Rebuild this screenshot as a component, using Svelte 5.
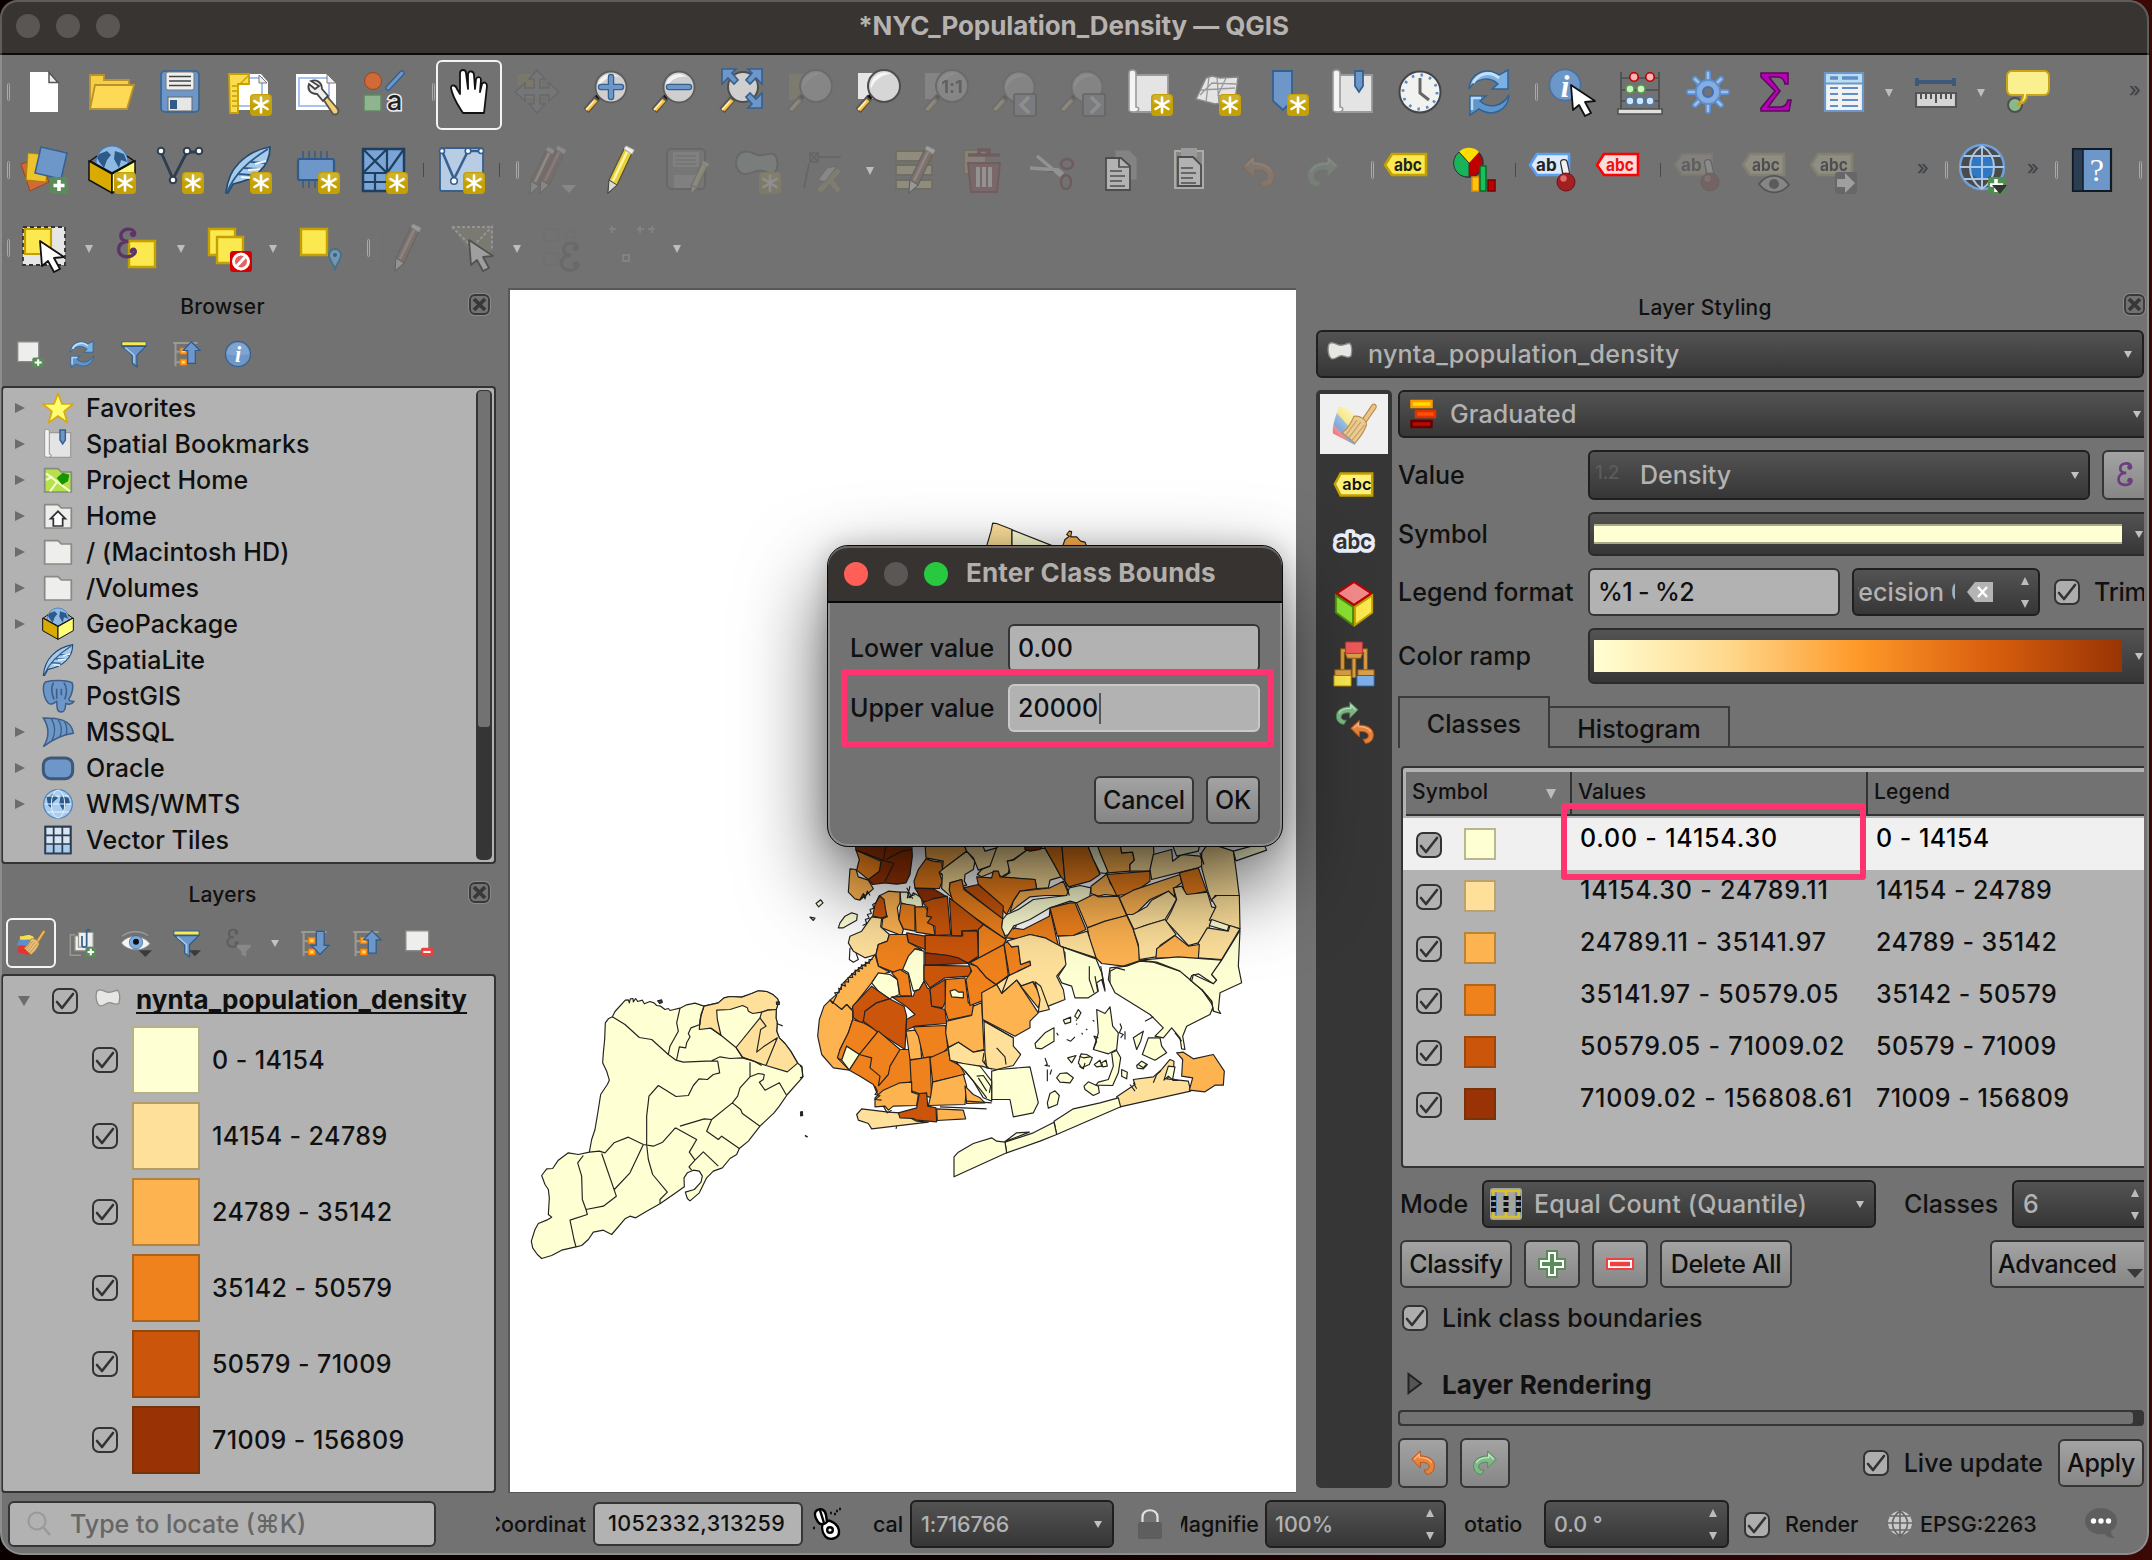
<script>
  // ---- shared icon fragments (48 x 48 grid) ----
  const star = '<rect x="26" y="26" width="22" height="22" rx="4" fill="#c4a000"/><rect x="27.500" y="27" width="19" height="9" rx="3" fill="#fff" opacity=".18"/><g stroke="#fff" stroke-width="2.600" stroke-linecap="round"><path d="M37 29.500v15M30.500 33l13 8M43.500 33l-13 8"/></g>';
  const plus = '<rect x="30" y="31" width="18" height="17" rx="3" fill="#5a8c5a"/><path d="M39 34v11M33.500 39.500h11" stroke="#fff" stroke-width="3.500"/>';
  const lens = '<path d="M17 29L5 43" stroke="#555" stroke-width="7"/><path d="M15 32L6 42" stroke="#fcc13b" stroke-width="4"/><path d="M13 33l-8 9" stroke="#fff3c8" stroke-width="1.300"/><path d="M20 25l-4 5" stroke="#111" stroke-width="4.500"/>';
  const glass = '<circle cx="30" cy="19" r="15.500" fill="#cfcfcf" stroke="#5c5c5c" stroke-width="1.800"/><path d="M17 22A13 13 0 0 1 38 9 18 18 0 0 0 17 22z" fill="#f3f3f3"/>';
  const bigGlass = '<circle cx="31" cy="18" r="16" fill="#d6d6d6" stroke="#4e4e4e" stroke-width="2"/><path d="M18 21A14 14 0 0 1 38 6 22 22 0 0 0 18 21z" fill="#f6f6f6"/>';
  const pencil = '<path d="M12 34L27 3l8 4-15 32-9 8z" fill="#e8cf3a" stroke="#54543c" stroke-width="1.300"/><path d="M16 35L30 6" stroke="#fff7a8" stroke-width="2.500"/><path d="M27 3l2-3 8 4-2 4z" fill="#eee" stroke="#bbb"/><path d="M12 34l8 5-9 8z" fill="#d8d8d8" stroke="#444"/>';
  const cursor = '<path d="M21 16l2 25 6-5 6 11 6-3-6-11 10-1z" fill="#fff" stroke="#111" stroke-width="1.800" stroke-linejoin="round"/>';
  const refresh = '<path d="M4 21C5 6 20-2 34 7l9-5v19H27l6-5c-9-8-22-6-29 5z" fill="#7db0e2" stroke="#2f6396" stroke-width="1.500"/><path d="M8 15C14 4 26 3 34 10" stroke="#c5dff5" stroke-width="3" fill="none"/><path d="M44 27c-1 15-16 23-30 14l-9 6V28h16l-6 5c9 8 22 6 29-6z" fill="#5f95cd" stroke="#2f6396" stroke-width="1.500"/><path d="M7 42V30h9" stroke="#b9d8f2" stroke-width="2.500" fill="none"/>';
  const feather = '<path d="M2 47c1-12 5-22 13-30C24 8 34 3 46 1c0 11-4 19-11 25-7 7-16 10-26 12L4 47z" fill="#a9cbea" stroke="#234a72" stroke-width="1.700"/><path d="M3 46C11 28 23 16 44 3M14 28l14 1M20 22l15 1M27 16l14 1" stroke="#2b5b8c" stroke-width="1.800" fill="none"/><path d="M17 31l10 1M24 24l12-1M31 18l11-3" stroke="#eef6ff" stroke-width="2"/>';
  const geo = '<circle cx="24" cy="16" r="16" fill="#8db9e3" stroke="#4a7bb0" stroke-width="1.200"/><path d="M11 8l8-3 4 4-4 5-3 8-4-5-3-5zM27 5l9 3 3 8-6-2-2 8-5-9z" fill="#2d5a88"/><path d="M2 15l22 12L46 15l-7-5M2 15l7-5" stroke="#111" stroke-width="1.500" fill="none"/><path d="M1 15l23 13v19L1 34z" fill="#d9aa00" stroke="#111" stroke-width="1.500"/><path d="M47 15L24 28v19l23-13z" fill="#ffff78" stroke="#111" stroke-width="1.500"/>';
  const tag = (f, s, t, c) => `<path d="M1 19L8 8h34v21H8z" fill="${f}" stroke="${s}" stroke-width="2.600"/><text x="24" y="25" font-size="17" font-weight="700" fill="${c}" text-anchor="middle" textLength="28" lengthAdjust="spacingAndGlyphs">${t}</text>`;
  const pin = '<path d="M34 17l2 10" stroke="#333" stroke-width="8" stroke-linecap="round"/><path d="M34 17l2 9" stroke="#f0f0f0" stroke-width="5.500" stroke-linecap="round"/><circle cx="36" cy="36" r="9" fill="#a42020" stroke="#6d1212"/><circle cx="33.500" cy="32.500" r="3.200" fill="#e06a6a"/>';
  const funnel = '<path d="M3 3h42v7H3z" fill="#fce94f" stroke="#36618f" stroke-width="2"/><path d="M4 11h40L29 26v20l-8-6V26z" fill="#6d97c9" stroke="#2f5a89" stroke-width="2"/><path d="M9 13l15 13v14" fill="none" stroke="#a9c8e8" stroke-width="2.500"/>';
  const treeBase = '<path d="M2 5h42M6 5v40M6 20h10M6 38h10" stroke="#9a9a90" stroke-width="3.500" fill="none"/><path d="M14 14h11v10H14zM14 33h11v10H14z" fill="#ff9a2a" stroke="#f57900" stroke-width="1.500"/><path d="M17 17h5v4h-5zM17 36h5v4h-5z" fill="#ffe34f"/>';
  const undo = '<path d="M3 17L19 2v9c16 0 27 7 26 20-1 9-7 14-15 14l-4-8c8 1 11-4 9-9-2-4-8-6-16-5v10z" fill="#e8833a" stroke="#b9541a" stroke-width="1.800"/><path d="M8 17l9-9v6c12 0 20 3 23 10" fill="none" stroke="#f9b98c" stroke-width="2.300"/>';
  const redo = '<g transform="matrix(-1 0 0 1 48 0)"><path d="M3 17L19 2v9c16 0 27 7 26 20-1 9-7 14-15 14l-4-8c8 1 11-4 9-9-2-4-8-6-16-5v10z" fill="#7fba86" stroke="#4f8a58" stroke-width="1.800"/><path d="M8 17l9-9v6c12 0 20 3 23 10" fill="none" stroke="#c8e8cc" stroke-width="2.300"/></g>';
  const folder = '<path d="M4 7h20l5 5h15v30H4z" fill="#eeeeec" stroke="#888a85" stroke-width="2.600"/>';
  const book = '<path d="M7 7h36v37H7z" fill="#e4e4e4" stroke="#9a9a9a" stroke-width="1.800"/><path d="M4 42V5c0-4 7-4 7 0v34c4 0 4 5-2 5-3 0-5-1-5-2z" fill="#f4f4f4" stroke="#9a9a9a" stroke-width="1.600"/>';
  const brush = '<path d="M5 12c10 2 12-6 24 2l-4 14-20 2z" fill="#fbe54a" opacity=".95"/><path d="M4 17c8 4 14-2 22 3l-4 12-22-4z" fill="#5d8fcc"/><path d="M3 29c8-4 14 4 20 0l4 14-12 1C10 40 6 42 1 40z" fill="#ee2f2f"/><path d="M33 20L44 3c2-2 5 0 4 3L37 23z" fill="#e9b566" stroke="#9d6a1c" stroke-width="1.300"/><path d="M24 17c6-2 14 3 14 9-4 9-9 14-14 18L12 33c6-4 9-9 12-16z" fill="#e7c07b" stroke="#a87931" stroke-width="1.300"/><path d="M27 20L16 35M31 22L19 38M35 25L22 41" stroke="#b98a3e" stroke-width="1.300"/>';
  const poly = '<path d="M3 9C6 2 14 6 21 9c8 3 14-3 21-3 5 5 4 17 2 24-7 5-12-2-18-1-7 1-13 9-18 5C2 30 1 17 3 9z" fill="#e6e6e4" stroke="#8e8e88" stroke-width="2.400"/>';
  const epsilon = (c) => `<path d="M31 9c-2-7-18-7-18 4 0 6 6 7 10 7-7 0-13 4-13 11 0 12 19 12 22 3M31 9c1 4-4 5-4 1M32 34c0-5-6-4-5 0" fill="none" stroke="${c}" stroke-width="4.500" stroke-linecap="round"/>`;
  const down = '<path d="M28 35h20L38 45z" fill="#3a3a3a"/>';

  const icons = {
    page: '<path d="M10 4h18l10 11v29H10z" fill="#fff"/><path d="M29 4.500v10h9z" fill="#eee" stroke="#555" stroke-width="1.500"/>',
    open: '<path d="M2 41V7h14v5h25v8" fill="#f8ce46" stroke="#b8922c" stroke-width="1.800"/><path d="M2 41L7 17h39l-7 24z" fill="#fdd955" stroke="#b8922c" stroke-width="1.800"/>',
    save: '<rect x="5" y="3" width="38" height="41" rx="4" fill="#6d97c9" stroke="#44678f" stroke-width="2"/><rect x="10" y="4" width="28" height="18" rx="2" fill="#eee" stroke="#777"/><path d="M13 8.500h22M13 13h22M13 17.500h22" stroke="#444" stroke-width="1.700"/><rect x="12" y="29" width="24" height="14" fill="#e6e6e6" stroke="#666"/><rect x="14" y="32" width="7" height="9" fill="#315a8b"/>',
    layoutNew: '<path d="M5 6h32l7 8v28H5z" fill="#fff"/><path d="M12 10h26v28H12z" fill="none" stroke="#a9c2ee" stroke-width="2"/><path d="M35 7v8h8z" fill="#eee" stroke="#777"/><path d="M5 6h20v10H14v29H6z" fill="#fbdc50" stroke="#c8a000" stroke-width="1.800"/><path d="M8 18h5M8 23h5M8 28h5M8 33h5M8 38h5M15 17l9-9" stroke="#c8a000" stroke-width="1.400"/>' + star,
    layouts: '<path d="M4 6h31l9 9v27H4z" fill="#fff"/><path d="M7 10h30v28H7z" fill="none" stroke="#a9c2ee" stroke-width="2"/><path d="M35 6v9h9z" fill="#eee" stroke="#777"/><path d="M29 28l12 18c5 2 7-3 4-6L32 25z" fill="#f0d070" stroke="#555" stroke-width="1.800"/><path d="M19 13c5-2 11 1 11 8l6 7-5 5-6-7c-7 0-10-5-8-10l6 5 4-3z" fill="#eee" stroke="#444" stroke-width="1.800"/>',
    styleMgr: '<circle cx="13" cy="13" r="8.500" fill="#d06a36" stroke="#9c4520"/><path d="M28 20L42 5" stroke="#365f8c" stroke-width="5.500" stroke-linecap="round"/><path d="M28 20L42 5" stroke="#6d97c9" stroke-width="3" stroke-linecap="round"/><path d="M4 27h17v16H4z" fill="#8fb48f" stroke="#5d8a5d" stroke-width="1.500"/><text x="27" y="42" font-size="27" fill="#222" stroke="#eee" stroke-width="3" paint-order="stroke">a</text>',
    hand: '<path d="M18 44C13 36 8 30 6 19c0-4 5-3 6 1l3 5V4c0-4 6-4 6 0l2 16V5c1-4 6-3 6 1l1 14 1-10c2-3 5-2 5 1l-1 12 2-8c2-3 5-1 5 2l-3 27z" transform="translate(0 1)" fill="#fff" stroke="#111" stroke-width="1.800" stroke-linejoin="round"/>',
    panSel: '<path d="M5 6h24v24H5z" fill="#a78f2e"/><path d="M24 2l8 9h-5v9h9v-5l10 9-10 9v-6h-9v9h5l-8 9-8-9h5v-9h-9v6L2 24l10-9v5h9v-9h-5z" fill="#7c8796" stroke="#444" stroke-width="1.500"/>',
    zoomIn: lens + glass + '<path d="M30 9v20M20 19h20" stroke="#36618f" stroke-width="6.500" stroke-linecap="round"/><path d="M30 9v20M20 19h20" stroke="#6d97c9" stroke-width="4" stroke-linecap="round"/>',
    zoomOut: lens + glass + '<path d="M20 19h20" stroke="#36618f" stroke-width="6.500" stroke-linecap="round"/><path d="M20 19h20" stroke="#6d97c9" stroke-width="4" stroke-linecap="round"/>',
    zoomFull: lens + '<circle cx="26" cy="19" r="15" fill="#cfcfcf" stroke="#4e4e4e" stroke-width="2"/><g fill="#6d97c9" stroke="#36618f" stroke-width="1.700"><path d="M5 1h14l-4 4 6 7-4 4-6-6-6 6z"/><path d="M45 1H31l4 4-6 7 4 4 6-6 6 6z"/><path d="M45 40H31l4-4-6-7 4-4 6 6 6-6z"/></g>',
    zoomSel: '<path d="M4 6h22v26H4z" fill="#b6a14a"/>' + lens + bigGlass,
    zoomLayer: '<path d="M5 5h22v26H5z" fill="#e6e6e6"/>' + lens + bigGlass,
    zoomNative: '<path d="M4 5h22v26H4z" fill="#ccc"/>' + lens + bigGlass + '<text x="31" y="25" font-size="18" font-weight="700" text-anchor="middle" fill="#222">1:1</text>',
    zoomLast: lens + glass + '<rect x="25" y="26" width="22" height="22" rx="2" fill="#8fa0b8" stroke="#333" stroke-width="1.600"/><path d="M40 29l-8 8 8 8" stroke="#fff" stroke-width="3.500" fill="none"/>',
    zoomNext: lens + glass + '<rect x="26" y="26" width="22" height="22" rx="2" fill="#8fa0b8" stroke="#333" stroke-width="1.600"/><path d="M34 29l8 8-8 8" stroke="#fff" stroke-width="3.500" fill="none"/>',
    mapNew: book + star,
    map3d: '<path d="M3 31L13 10l6-2 8 2 18-1-3 24-20 3z" fill="#e4e4e4" stroke="#888" stroke-width="1.500"/><path d="M8 22l34-2M16 9l-3 25M24 9l2 27M33 10l-8 17 17 5M7 27l12-12 24 1" stroke="#999" fill="none" stroke-width="1.300"/>' + star,
    bookmarkNew: '<path d="M12 3h19v30l-9 9-10-9z" fill="#6d97c9" stroke="#36618f" stroke-width="1.800"/>' + star,
    bookmarks: book + '<path d="M26 3h8v15l-4 6-4-6z" fill="#6d97c9" stroke="#36618f" stroke-width="1.800"/>',
    clock: '<circle cx="23" cy="24" r="20.500" fill="#f2f2f0" stroke="#444" stroke-width="2"/><circle cx="23" cy="24" r="17" fill="none" stroke="#5b8cc6" stroke-width="2.800" stroke-dasharray="2.500 6.400"/><path d="M23 10v15l9 7" fill="none" stroke="#666" stroke-width="3"/>',
    refresh,
    identify: '<circle cx="17" cy="17" r="15.500" fill="#6d97c9" stroke="#48709e" stroke-width="1.500"/><text x="17" y="29" font-size="31" font-weight="700" font-style="italic" font-family="Liberation Serif, serif" fill="#fff" text-anchor="middle">i</text><g transform="translate(2 1)">' + cursor + '</g>',
    abacus: '<path d="M5 4v38M43 4v38M5 10h38M5 22h38M5 33h38" stroke="#4e4e4e" stroke-width="1.700"/><path d="M2 41h44v5H2z" fill="#e0e0e0" stroke="#4e4e4e" stroke-width="1.500"/><g stroke-width="1.600"><circle cx="18" cy="9" r="4.200" fill="#ffb3b3" stroke="#b00"/><circle cx="34" cy="9" r="4.200" fill="#ffb3b3" stroke="#b00"/><circle cx="14" cy="21" r="4" fill="#c9f5c0" stroke="#5a9a4c"/><circle cx="25" cy="21" r="4" fill="#c9f5c0" stroke="#5a9a4c"/><circle cx="14" cy="33" r="4" fill="#cfe6fa" stroke="#4c7aa8"/><circle cx="24" cy="33" r="4" fill="#cfe6fa" stroke="#4c7aa8"/><circle cx="34" cy="33" r="4" fill="#cfe6fa" stroke="#4c7aa8"/></g>',
    gear: '<g stroke="#5c8fd0" stroke-width="6" stroke-linecap="round"><path d="M24 5v38M5 24h38M11 11l26 26M37 11L11 37"/></g><g stroke="#9fc0ea" stroke-width="2.500" stroke-linecap="round"><path d="M24 5v38M5 24h38M11 11l26 26M37 11L11 37"/></g><circle cx="24" cy="24" r="12" fill="#86ade0" stroke="#5c8fd0" stroke-width="2"/><circle cx="24" cy="24" r="5" fill="#727272" stroke="#3f6fb0" stroke-width="2"/>',
    sigma: '<path d="M9 5h27v11h-3c-1-5-3-7-8-7h-8l11 14-12 16h12c5 0 7-3 8-7h3l-2 11H9v-3l14-17L9 9z" fill="#b800b8" stroke="#5a0a5a" stroke-width="1.600"/>',
    table: '<path d="M5 5h38v38H5z" fill="#f2f2f2" stroke="#6d97c9" stroke-width="2.200"/><path d="M6 6h36v9H6z" fill="#bcdcf2"/><path d="M6 15.500h36" stroke="#6d97c9" stroke-width="2"/><path d="M10 10h8M22 10h16" stroke="#5f8fc6" stroke-width="3.500"/><path d="M10 20h8M22 20h16M10 26h8M22 26h16M10 32h8M22 32h16M10 38h8M22 38h16" stroke="#5f8fc6" stroke-width="2.200"/>',
    ruler: '<path d="M5 14h37M5 10v8M42 10v8" stroke="#3d5878" stroke-width="4"/><path d="M4 25h40v14H4z" fill="#d5d5d5" stroke="#555" stroke-width="2.200"/><path d="M9 26v5M14 26v5M19 26v5M24 26v9M29 26v5M34 26v5M39 26v5" stroke="#333" stroke-width="1.600"/>',
    tip: '<circle cx="11" cy="37" r="7" fill="#8ab88a" stroke="#4e4e4e" stroke-width="2"/><path d="M8 3h32q5 0 5 6v12q0 6-5 6H23c0 4-3 9-10 10 4-3 6-6 6-10H8q-5 0-5-6V9q0-6 5-6z" fill="#fbf08f" stroke="#c9a415" stroke-width="2"/>',

    sources: '<path d="M1 18l18-6 10 24-19 9z" fill="#d06a36" stroke="#9c4520"/><path d="M8 7l20 2-2 27-20-2z" fill="#ecc32c" stroke="#a88200"/><path d="M21 1l26 6-6 26-26-6z" fill="#6d97c9" stroke="#36618f" stroke-width="1.500"/>' + plus,
    geoNew: geo + star,
    shape: '<path d="M5 6l12 27L31 6h12" fill="none" stroke="#2c3e50" stroke-width="2.800"/><g fill="#fff" stroke="#2c3e50" stroke-width="2"><circle cx="5" cy="5" r="3.300"/><circle cx="31" cy="5" r="3.300"/><circle cx="43" cy="5" r="3.300"/><circle cx="17" cy="34" r="3.300"/></g>' + star,
    featherNew: feather + star,
    chip: '<path d="M11 5v37M17 5v37M23 5v37M29 5v37M35 5v37" stroke="#3d5f87" stroke-width="1.800"/><rect x="6" y="13" width="36" height="21" rx="2" fill="#6d97c9" stroke="#2f5a89" stroke-width="2.200"/>' + star,
    mesh: '<path d="M3 3h41v42H3z" fill="#7ba5d6" stroke="#1f3e60" stroke-width="2.500"/><path d="M27 3v42M3 27h41M3 3l24 24L44 3M3 27L27 3M3 36h24M15 27v18" stroke="#1f3e60" stroke-width="2.200" fill="none"/>' + star,
    virtual: '<rect x="3" y="2" width="43" height="43" rx="2" fill="#b8cce4" stroke="#36618f" stroke-width="1.800"/><path d="M5 5l12 28L31 5h13" fill="none" stroke="#36618f" stroke-width="2.600"/><g fill="#fff" stroke="#36618f" stroke-width="1.600"><circle cx="5" cy="5" r="2.500"/><circle cx="31" cy="5" r="2.800"/><circle cx="44" cy="5" r="2.500"/><circle cx="17" cy="35" r="3.300"/></g>' + star,
    pencils: '<g transform="translate(-10 1)">' + pencil.replaceAll('#e8cf3a', '#b5524a') + '</g>' + pencil.replaceAll('#e8cf3a', '#b5524a').replaceAll('#fff7a8', '#d8a8a0') + '<path d="M32 39h15l-7 8z" fill="#ddd"/>',
    pencil,
    saveEdits: '<g transform="translate(-2 1)"><rect x="4" y="2" width="38" height="40" rx="4" fill="#8a8a8a" stroke="#444" stroke-width="2"/><rect x="10" y="5" width="26" height="15" fill="#bbb"/><path d="M12 9h21M12 13h21M12 17h21" stroke="#555"/><rect x="11" y="28" width="22" height="13" fill="#bbb"/></g><g transform="translate(18 15) scale(.7)">' + pencil + '</g>',
    polyNew: '<path d="M3 16C4 4 14 4 22 8c8 4 14-3 20 1 4 6 3 17-2 18-7 1-8-4-16-2-5 1-12 5-16 2-4-3-5-7-5-11z" fill="#8fb09a" stroke="#444" stroke-width="2"/>' + star,
    tools: '<path d="M9 7h8v9H9zM10 8l6 7M16 8l-6 7M18 11h22M8 18L3 42" stroke="#333" stroke-width="1.600" fill="none"/><path d="M18 45l20-21M38 45L24 28" stroke="#c9a43a" stroke-width="5"/><path d="M17 34l9-12 10-2-12 16z" fill="#ddd" stroke="#555"/>',
    editTable: '<path d="M3 5h36v10H3zM3 19h36v10H3zM3 34h36v9H3z" fill="#c9b878" stroke="#73653a" stroke-width="1.800"/><g transform="translate(5 0)">' + pencil.replaceAll('#e8cf3a', '#a56a5a').replaceAll('#fff7a8', '#d0a8a0') + '</g>',
    trash: '<path d="M3 4h22v24H3z" fill="#c9a850" stroke="#8a6a20" stroke-width="1.800"/><path d="M7 9h32M18 8V4h10v4" stroke="#a02030" stroke-width="3.500" fill="none"/><path d="M7 17h32l-3 29H10z" fill="#c04050" stroke="#a02030" stroke-width="2"/><path d="M17 21v20M23 21v20M29 21v20" stroke="#ddd" stroke-width="4"/>',
    scissors: '<path d="M1 22l28 2 5 4M8 10l24 20" stroke="#ddd" stroke-width="3.500"/><ellipse cx="38" cy="18" rx="6" ry="5" fill="none" stroke="#902030" stroke-width="2.500"/><ellipse cx="37" cy="36" rx="5" ry="7" fill="none" stroke="#902030" stroke-width="2.500"/>',
    copy: '<path d="M18 4h14l8 8v22H18z" fill="#999" stroke="#777"/><path d="M9 12h15l9 8v24H9z" fill="#fff" stroke="#222" stroke-width="1.800"/><path d="M22 12v9h10M13 25h12M13 30h15M13 35h12M13 40h15" fill="none" stroke="#222" stroke-width="1.700"/>',
    paste: '<path d="M10 5h28v37H10z" fill="#a9a090" stroke="#eee" stroke-width="2"/><path d="M16 2h16v9H16z" fill="#ccc"/><path d="M13 11h15l8 8v21H13z" fill="#fff" stroke="#222" stroke-width="1.800"/><path d="M16 22h12M16 27h15M16 32h12M16 37h15" stroke="#222" stroke-width="1.700"/>',
    undoBar: '<g transform="translate(7 7) scale(.76)">' + undo + '</g>',
    redoBar: '<g transform="translate(4 7) scale(.76)">' + redo + '</g>',
    undo, redo,
    label: tag('#fce94f', '#c4a000', 'abc', '#222'),
    chart: '<circle cx="17" cy="17" r="14" fill="#c00000" stroke="#333" stroke-width="1.500"/><path d="M17 17L7 6a14 14 0 0 1 20 0z" fill="#ffdd00"/><path d="M17 17L7 6a14 14 0 0 0 10 25z" fill="#19b35a" stroke="#333"/><path d="M20 31h7v14h-7z" fill="#ffc30f" stroke="#e09000" stroke-width="1.500"/><path d="M28 20h6v25h-6z" fill="#17c05a" stroke="#0a6a2a" stroke-width="1.500"/><path d="M36 34h7v11h-7z" fill="#c00000" stroke="#700" stroke-width="1.500"/>',
    labelPin: '<path d="M0 19L7 8h32v21H7z" fill="#dbeafe" stroke="#5a9ff0" stroke-width="2.600"/><text x="6" y="25" font-size="17" font-weight="700" fill="#222">ab</text>' + pin,
    labelRed: '<g transform="translate(-2 0)">' + tag('#ffdcdc', '#ff0000', 'abc', '#ee1111') + '</g>',
    labelPinOff: '<path d="M1 19L8 8h30v21H8z" fill="#c9c08a" stroke="#a59a50" stroke-width="2"/><text x="7" y="25" font-size="17" font-weight="700" fill="#111">ab</text>' + pin,
    labelEye: tag('#c9c08a', '#a59a50', 'abc', '#111') + '<path d="M17 38c8-11 22-11 30 1-9 10-22 10-30-1z" fill="#aaa" stroke="#222" stroke-width="1.800"/><circle cx="32" cy="38" r="5" fill="#333"/>',
    labelMove: tag('#c9c08a', '#a59a50', 'abc', '#111') + '<rect x="25" y="26" width="22" height="22" rx="3" fill="#555"/><path d="M27 33h8v-6l10 10-10 10v-6h-8z" fill="#eee"/>',
    globe: '<circle cx="24" cy="21" r="22" fill="#4a4a4a" stroke="#6fa0dc" stroke-width="2.500"/><circle cx="24" cy="21" r="12" fill="#2f78c4"/><path d="M24 0v42M2 21h44M6 10h36M6 33h36M24 0C8 10 8 32 24 43M24 0c16 10 16 32 0 43" fill="none" stroke="#a8c6e8" stroke-width="2"/><rect x="30" y="31" width="17" height="17" rx="3" fill="#4f9050"/><path d="M38 33v13M32 39h13" stroke="#fff" stroke-width="3.500"/><path d="M34 39h15l-7 9z" fill="#333"/>',
    help: '<path d="M5 3h38v42H5z" fill="#6d97c9" stroke="#111b26" stroke-width="2.200"/><path d="M5 3h10v42H5z" fill="#2b3d50" stroke="#111b26" stroke-width="1.500"/><text x="29" y="35" font-size="32" font-family="Liberation Serif, serif" fill="#fff" text-anchor="middle">?</text>',

    select: '<path d="M3 3h42v38H3z" fill="#e6e6e6" stroke="#333" stroke-width="1.800" stroke-dasharray="4 3"/><path d="M5 5h26v25H5z" fill="#fce94f" stroke="#c4a000" stroke-width="2.200"/>' + '<g transform="translate(-1 1)">' + cursor + '</g>',
    selectExpr: '<path d="M17 17h26v26H17z" fill="#fce94f" stroke="#c4a000" stroke-width="2.400"/><g transform="translate(-1 2) scale(.76)">' + epsilon('#5c3566') + '</g>',
    deselect: '<path d="M5 5h26v26H5z" fill="#fce94f" stroke="#c4a000" stroke-width="2.400"/><path d="M13 13h26v26H13z" fill="#fce94f" stroke="#c4a000" stroke-width="2.400"/><rect x="26" y="27" width="22" height="21" rx="3" fill="#d40000"/><circle cx="37" cy="37.500" r="7.500" fill="#e86060" stroke="#fff" stroke-width="3"/><path d="M32 43l10-11" stroke="#fff" stroke-width="3"/>',
    selectLoc: '<path d="M5 5h26v26H5z" fill="#fce94f" stroke="#c4a000" stroke-width="2.400"/><path d="M39 45c-2-6-6-10-6-14a6 6 0 0 1 12 0c0 4-4 8-6 14z" fill="#7297b3" stroke="#42708f" stroke-width="1.800"/><circle cx="39" cy="31" r="2" fill="#4a5d6c"/>',
    meshEdit: '<path d="M3 3h41v42H3zM3 27h41" fill="none" stroke="#666" stroke-width=".6"/><g transform="translate(4 0)">' + pencil.replaceAll('#e8cf3a', '#a56a5a').replaceAll('#fff7a8', '#d0a8a0') + '</g>',
    meshSelect: '<path d="M4 3h40v24L26 34z" fill="#a79c56" opacity=".6"/><path d="M4 3l20 20L44 3v22M4 3h40" stroke="#ddd" fill="none" stroke-width="2" stroke-dasharray="3 2"/>' + cursor,
    meshExpr: '<path d="M4 5h14v12H4zM4 29h14v12H4zM24 14l7-10 6 10z" fill="none" stroke="#555"/><g transform="translate(14 16) scale(.75)">' + epsilon('#333') + '</g>',
    meshNode: '<path d="M4 5h40v40H4zM4 5l14 30L34 5" fill="none" stroke="#777"/><path d="M1 5h7M4 2v7M29 5h7M32 2v7M40 5h7M44 2v7M15 31h6v6h-6z" stroke="#eee" fill="none" stroke-width="2"/>',

    addLayer: '<path d="M3 3h36v34H3z" fill="#eeeeec" stroke="#888a85" stroke-width="2.200"/><rect x="28" y="30" width="20" height="17" rx="3" fill="#5a8c5a"/><path d="M38 33v11M32 38.500h12" stroke="#fff" stroke-width="3.500"/>',
    funnel,
    collapse: treeBase + '<path d="M33 3l15 15h-8v22H27V18h-8z" fill="#6d97c9" stroke="#2f5a89" stroke-width="2"/>',
    expand: treeBase + '<path d="M33 42l15-15h-8V4H27v23h-8z" fill="#6d97c9" stroke="#2f5a89" stroke-width="2"/>',
    info: '<circle cx="24" cy="24" r="21.500" fill="#6d97c9" stroke="#36618f" stroke-width="2.200"/><path d="M5 24a19 19 0 0 1 38 0c-10 3-28 3-38 0z" fill="#fff" opacity=".13"/><text x="24" y="38" font-size="38" font-weight="700" font-style="italic" font-family="Liberation Serif, serif" fill="#fff" text-anchor="middle">i</text>',
    brush,
    addGroup: '<path d="M12 10H4v35h18" fill="none" stroke="#9a9a90" stroke-width="2.500"/><path d="M12 12h24v25H12z" fill="#eee" stroke="#9a9a90" stroke-width="2"/><path d="M18 6h25v25H18z" fill="#eee" stroke="#9a9a90" stroke-width="2"/><path d="M24 12v16c0 4 8 4 8 0V4c0-4 5-4 5 0" fill="none" stroke="#36618f" stroke-width="3"/>' + plus,
    eye: '<path d="M2 24C11 11 33 10 45 25 34 38 12 37 2 24z" fill="#f4f4f4" stroke="#888" stroke-width="1.500"/><circle cx="24" cy="23" r="10" fill="#7fabe2" stroke="#36618f"/><circle cx="24" cy="22" r="4.500" fill="#111"/><path d="M3 14C14 5 32 5 42 13" fill="none" stroke="#999" stroke-width="2"/>' + down,
    funnelDown: funnel + down,
    exprFilter: '<g transform="translate(-2 -2) scale(.8)">' + epsilon('#333') + '</g><path d="M22 27h24v4l-8 7v9l-8-3v-6l-8-7z" fill="#bbb"/>',
    removeLayer: '<path d="M3 3h38v33H3z" fill="#eeeeec" stroke="#888a85" stroke-width="2.200"/><rect x="28" y="31" width="20" height="14" rx="3" fill="#ef4040"/><path d="M32 38h12" stroke="#fff" stroke-width="3.500"/>',

    star: '<path d="M24 2l6 16h17L33 29l5 17-14-10-14 10 5-17L1 18h17z" fill="#ffff6e" stroke="#d9a90f" stroke-width="2.600" stroke-linejoin="round"/>',
    project: '<path d="M4 7h20l5 5h15v30H4z" fill="#b6e04c" stroke="#888a85" stroke-width="2.600"/><path d="M6 14l36 27M12 41l12-16M6 24l10-5" stroke="#f4ffc8" stroke-width="3"/><path d="M22 21l9-8 10 3-2 10-9 5z" fill="#159600"/>',
    home: folder + '<path d="M13 28l11-11 11 11h-4v11H17V28z" fill="#fff" stroke="#333" stroke-width="2.600"/>',
    folder, geo, feather,
    elephant: '<path d="M5 3c12-3 30-3 40 1 3 6 0 18-5 25 2 5 5 2 8 3-3 5-9 5-12 3-2 4 1 13-7 13s-6-8-7-16c-6 4-9 6-13 2C3 27-1 10 5 3z" fill="#6d97c9" stroke="#3d5f87" stroke-width="2.200"/><path d="M17 4c-4 8-2 18 1 25M33 4c5 8 4 18 1 25M22 13v15M29 13v10" fill="none" stroke="#3d5f87" stroke-width="2.400"/>',
    mssql: '<path d="M2 3c22 0 42 2 45 23C32 28 18 34 2 46c9-14 9-29 0-43z" fill="#6d97c9" stroke="#3d5f87" stroke-width="2.200"/><path d="M14 4c7 12 6 23 1 33M24 5c7 10 6 18 3 27M34 9c4 7 4 13 2 20" fill="none" stroke="#3d5f87" stroke-width="2"/>',
    oracle: '<rect x="2" y="9" width="44" height="31" rx="11" fill="#6d97c9" stroke="#3d5878" stroke-width="4.500"/>',
    wms: '<circle cx="24" cy="24" r="21.500" fill="#a9cdee" stroke="#5585ba" stroke-width="2"/><path d="M7 14l9-5 8 6-7 6-3 9-5-4zM28 10l12 5 2 8-6 1-4 10-6-10z" fill="#2d5a88"/><ellipse cx="24" cy="24" rx="10" ry="21" fill="none" stroke="#e6f2ff" stroke-width="1.500"/><path d="M4 24h40M8 12h32M8 36h32" stroke="#e6f2ff" stroke-width="1.500"/>',
    grid: '<path d="M5 4h38v40H5z" fill="#d8e6f4" stroke="#2b3d50" stroke-width="2.600"/><path d="M5 30h38v14H5z" fill="#aacbea"/><path d="M5 4h38v40H5zM5 17h38M5 30h38M17.500 4v40M30.500 4v40" fill="none" stroke="#2b3d50" stroke-width="2.600"/>',
    bookTree: book + '<path d="M27 3h8v15l-4 6-4-6z" fill="#6d97c9" stroke="#36618f" stroke-width="2.200"/>',
    poly,

    brushFaded: '<defs><linearGradient id="fade" x1="0" y1="1" x2=".7" y2="0"><stop offset="0" stop-color="#f05050"/><stop offset=".35" stop-color="#f09090"/><stop offset=".4" stop-color="#7fa8d8"/><stop offset=".62" stop-color="#9dbde0"/><stop offset=".66" stop-color="#f8e88a"/><stop offset="1" stop-color="#fbf3c4"/></linearGradient></defs><path d="M8 6C18 6 20 12 27 16L25 46 2 34C1 26 5 16 8 6z" fill="url(#fade)"/><path d="M32 20L43 4c2-2 5 0 4 3L36 23z" fill="#ecc48a" stroke="#b98a4a" stroke-width="1.200"/><path d="M24 16c6-1 13 3 13 9-3 9-8 14-12 19L12 33c6-4 9-10 12-17z" fill="#ebcb94" stroke="#b98f52" stroke-width="1.200"/><path d="M27 20L16 35M31 22L19 38M35 25L22 41" stroke="#c9a063" stroke-width="1.300"/>',
    labelMini: '<path d="M4 24L10 13h33v23H10z" fill="#fff07a" stroke="#c4a000" stroke-width="2.600"/><text x="27" y="30" font-size="17" font-weight="600" fill="#111" text-anchor="middle">abc</text>',
    cloud: '<text x="24" y="31" font-size="23" font-weight="700" fill="#333" stroke="#e8edfb" stroke-width="8" stroke-linejoin="round" paint-order="stroke" text-anchor="middle" textLength="38" lengthAdjust="spacingAndGlyphs">abc</text>',
    cube: '<path d="M24 2l18 12-18 12L6 14z" fill="#f28a8a" stroke="#b00" stroke-width="2.200"/><path d="M5 16l18 12v19L5 34z" fill="#8ae234" stroke="#4e8a0a" stroke-width="2"/><path d="M43 16L25 28v19l18-13z" fill="#fce94f" stroke="#c4a000" stroke-width="2"/>',
    brushes: '<path d="M12 32V10h24v22M24 14v24" fill="none" stroke="#8c5d12" stroke-width="5"/><path d="M12 32V10h24v22M24 14v24" fill="none" stroke="#dba04a" stroke-width="2.800"/><path d="M15 1h18v12H15z" fill="#ef5a5a" stroke="#a33"/><path d="M15 13h18l-2 5H17z" fill="#dba04a" stroke="#8c5d12"/><path d="M4 30h17v6H4zM28 30h17v6H28z" fill="#dba04a" stroke="#8c5d12"/><path d="M3 36h18v11H3z" fill="#fce94f" stroke="#a88200"/><path d="M27 36h18v11H27z" fill="#7fb0ea" stroke="#36618f"/>',
    history: '<g transform="translate(4 0) scale(.54)">' + redo + '</g><g transform="translate(19 19) scale(.56)">' + undo + '</g>'
  };

  // Toolbars: icon cells, drop-down arrows, handles and separators with their widths
  const I = (n, off = 0, w = 68) => ({ k: 'icon', n, off, w });
  const A = { k: 'arrow', w: 24 };
  const H = (w) => ({ k: 'handle', w });
  const S = (w = 10) => ({ k: 'sep', w });
  const M = (w) => ({ k: 'more', w });
  const bars = [
    [H(10), I('page'), I('open'), I('save'), I('layoutNew'), I('layouts'), I('styleMgr'), H(17), { k: 'icon', n: 'hand', w: 68, on: true }, I('panSel', 1), I('zoomIn'), I('zoomOut'), I('zoomFull'), I('zoomSel', 1), I('zoomLayer'), I('zoomNative', 1), I('zoomLast', 1), I('zoomNext', 1), I('mapNew'), I('map3d'), I('bookmarkNew'), I('bookmarks'), I('clock'), I('refresh'), H(15), I('identify'), I('abacus'), I('gear'), I('sigma'), I('table'), A, I('ruler'), A, I('tip'), M(79)],
    [H(10), I('sources'), I('geoNew'), I('shape'), I('featherNew'), I('chip'), I('mesh'), S(), I('virtual', 0, 66), S(), H(15), I('pencils', 1), I('pencil'), I('saveEdits', 1), I('polyNew', 1), I('tools', 1), A, I('editTable', 2), I('trash', 4), I('scissors', 4), I('copy', 3), I('paste', 3), I('undoBar', 1), I('redoBar', 1), H(15), I('label'), I('chart'), S(), I('labelPin'), I('labelRed'), S(8), I('labelPinOff', 1), I('labelEye', 2), I('labelMove', 2), M(61), H(19), I('globe'), M(23), H(19), I('help'), H(16)],
    [H(10), I('select'), A, I('selectExpr'), A, I('deselect'), A, I('selectLoc'), H(16), I('meshEdit', 2), I('meshSelect', 2), A, I('meshExpr', 1), I('meshNode', 1), A]
  ];

  const browser = [
    ['star', 'Favorites', 1], ['bookTree', 'Spatial Bookmarks', 1], ['project', 'Project Home', 1], ['home', 'Home', 1],
    ['folder', '/ (Macintosh HD)', 1], ['folder', '/Volumes', 1], ['geo', 'GeoPackage', 1], ['feather', 'SpatiaLite', 0],
    ['elephant', 'PostGIS', 0], ['mssql', 'MSSQL', 1], ['oracle', 'Oracle', 1], ['wms', 'WMS/WMTS', 1], ['grid', 'Vector Tiles', 0]
  ];
  const classes = [
    ['#feffd3', '0.00 - 14154.30', '0 - 14154'],
    ['#fee09b', '14154.30 - 24789.11', '14154 - 24789'],
    ['#feb351', '24789.11 - 35141.97', '24789 - 35142'],
    ['#ef821d', '35141.97 - 50579.05', '35142 - 50579'],
    ['#cb560b', '50579.05 - 71009.02', '50579 - 71009'],
    ['#993305', '71009.02 - 156808.61', '71009 - 156809']
  ];
  const fills = classes.map((c) => c[0]);

  // Neighbourhood polygons: [class index, path], drawn at three units per pixel
  const staten = [
    [0, 'M337,172 345,156 376,122 385,121 388,130 391,118 399,117 400,127 407,117 413,126 427,122 433,133 450,126 462,130 470,138 482,140 495,150 505,147 510,153 522,150 540,146 560,136 585,131 612,140 655,130 672,115 690,111 725,113 755,102 775,94 800,96 820,106 833,118 836,128 829,148 828,175 832,190 830,215 838,235 855,252 872,275 893,311 905,320 909,352 862,405 838,440 822,460 780,500 745,545 718,567 710,585 690,597 667,625 640,635 620,655 598,700 570,724 562,717 556,698 583,690 603,668 607,650 598,635 580,632 562,640 552,655 553,682 520,705 480,733 440,755 407,775 390,770 375,778 335,825 310,812 280,818 265,840 245,858 228,862 185,872 155,888 125,897 112,885 98,865 94,845 105,810 115,792 140,782 155,773 145,765 148,715 145,690 135,675 125,648 140,628 158,627 175,602 205,580 235,585 268,578 275,540 285,510 295,450 302,405 322,375 328,362 320,335 308,310 310,280 314,240 316,190 325,178Z'],
    [1, 'M612,140 655,130 672,115 690,111 725,113 755,102 775,94 800,96 820,106 833,118 836,128 829,150 803,152 785,158 758,162 745,155 742,145 728,138 690,150 650,152 652,180 663,228 633,206 598,210 600,180Z'],
    [1, 'M785,158 803,152 829,150 828,175 832,190 830,215 838,235 855,252 872,275 893,311 862,337 798,318 727,293 708,264 780,175Z']
  ];
  const statenLines = 'M337,172 375,195 418,234 455,240 505,285 528,302M540,146 530,190 535,215 510,260 505,285M612,140 603,165 600,195 573,205 565,222 570,232 560,250 557,265 538,262 530,300M780,175 798,200 782,210 770,278 790,262 832,235 798,318M633,206 660,225 708,264 727,293M528,302 550,308 635,304 660,292 690,297 727,295M635,304 653,305 659,340 640,345 622,360 597,358 580,378 565,408 528,411 475,378 447,410 440,470 440,555M727,295 760,304 785,318M750,308 750,352 720,385 713,410 697,430 635,480 613,478 540,500M526,505 488,548 460,560 430,555M750,352 775,342 793,345 790,360 778,368 795,392 838,370 860,408M697,430 722,450 727,462 780,500M635,480 620,515 655,540 665,530 718,567M526,505 590,540 568,578 585,602 567,622 575,632M585,602 610,577 655,620M430,555 385,533 342,550 315,580 298,575 268,578M430,555 390,640 343,690M440,555 445,600 458,645 502,698 480,720 480,733M305,582 349,710 310,740 258,750 247,720 245,650 233,610 250,588M258,750 262,765 210,782 222,840 228,862';
  const city = [
    [5, 'M165,70 335,70 337,110 330,165 318,190 290,194 255,190 218,195 205,180 238,155 243,120 168,92Z'],
    [3, 'M168,92 243,125 238,155 205,180 170,152 178,120Z'],
    [2, 'M150,148 168,150 175,172 205,182 220,208 200,225 180,242 165,238 145,218Z'],
    [0, 'M115,325 120,310 135,290 155,280 172,285 170,302 130,325Z'], [0, 'M48,252 62,241 69,250 56,262Z'], [0, 'M30,293 45,296 40,303Z'],
    [2, 'M375,70 490,70 500,95 418,158 425,165 430,125 378,115Z'],
    [3, 'M378,118 400,125 425,128 428,150 418,160 427,185 418,207 345,206 342,185 355,150Z'],
    [1, 'M500,95 525,125 520,150 495,165 493,185 500,197 487,200 485,180 450,190 448,212 458,236 425,207 427,165 418,158 440,140Z'],
    [1, 'M490,70 545,70 555,95 590,85 590,100 570,140 535,152 520,115 500,95Z'],
    [1, 'M590,85 605,70 672,70 680,92 640,120 622,125 630,140 625,160 605,172 585,155 545,172 532,165 545,150 570,140Z'],
    [1, 'M640,122 680,92 735,86 760,130 783,172 750,182 745,205 710,207 705,180 605,175 630,160 622,125Z'],
    [5, 'M672,70 735,70 720,90 690,95 675,90Z'], [3, 'M735,70 785,70 795,185 783,172 760,130 735,86Z'],
    [3, 'M785,70 860,70 880,120 900,165 870,185 806,202 795,185Z'],
    [0, 'M860,70 890,70 925,155 918,162 900,160 880,120Z'],
    [2, 'M890,70 960,70 965,100 998,98 1003,122 990,135 990,155 925,160 900,100Z'],
    [1, 'M960,70 1060,70 1062,110 1050,155 990,155 990,135 1003,122 998,98 965,100Z'],
    [1, 'M1060,105 1115,90 1118,125 1145,105 1200,110 1212,135 1195,145 1155,155 1055,180 1050,150Z'],
    [0, 'M1115,70 1200,70 1195,95 1130,110Z'],
    [1, 'M1205,100 1225,70 1300,95 1308,150 1318,230 1245,228 1235,245 1225,220 1205,145Z'],
    [0, 'M1300,95 1390,70 1400,92 1308,124Z'],
    [3, 'M530,172 575,175 580,155 595,155 600,172 705,180 710,207 660,215 640,245 620,285 535,195Z'],
    [2, 'M660,215 710,210 750,205 790,185 808,228 735,228 690,232 650,262 630,278 640,245Z'],
    [4, 'M490,205 535,195 570,225 610,260 608,300Z'],
    [3, 'M450,190 485,180 492,210 608,298 606,320 618,360 460,250 448,212Z'],
    [0, 'M620,285 655,270 700,240 800,228 808,205 840,198 873,205 868,240 830,250 810,245 750,265 690,300 640,320 632,345 615,348 605,325 608,300Z'],
    [3, 'M638,325 670,330 748,290 750,268 768,350 775,378 735,355 690,345 650,358 618,355Z'],
    [3, 'M750,265 810,250 825,250 858,330 820,348 772,350Z'],
    [2, 'M873,200 922,162 930,190 958,230 915,225 895,230 873,222Z'],
    [3, 'M920,165 1050,155 1050,185 1015,210 975,225 950,228Z'],
    [2, 'M830,250 880,225 895,232 955,230 980,288 920,305 862,325Z'],
    [2, 'M958,235 1000,212 1140,165 1145,190 1125,205 1125,232 1105,215 1050,240 1000,290 980,285Z'],
    [1, 'M998,285 1040,262 1055,242 1105,215 1130,238 1112,272 1095,300 1030,320 1003,332 980,285Z'],
    [3, 'M1138,160 1195,145 1220,215 1157,230Z'],
    [1, 'M1120,205 1145,200 1160,225 1222,218 1235,262 1248,265 1225,330 1195,370 1165,378 1098,305 1112,280 1130,240Z'],
    [1, 'M1235,240 1250,228 1318,228 1320,328 1228,302 1248,262Z'], [0, 'M1235,300 1287,318 1282,334 1228,318Z'],
    [1, 'M1222,325 1285,335 1290,318 1320,328 1265,420 1195,415 1195,370Z'],
    [2, 'M862,325 915,305 980,288 1000,330 1018,390 1018,424 970,440 905,432 888,415 870,365Z'],
    [1, 'M1000,330 1045,315 1095,300 1128,345 1080,378 1068,412 1018,420 1015,375Z'],
    [2, 'M1070,388 1125,348 1165,380 1198,375 1195,418 1068,415Z'],
    [1, 'M775,350 820,348 862,335 888,415 780,380Z'],
    [0, 'M780,380 888,418 905,460 915,515 905,480 890,490 895,515 865,535 825,535 815,500 785,490 775,470 795,440 795,400Z'],
    [0, 'M930,445 980,440 1020,425 1060,428 1140,455 1205,510 1240,560 1230,585 1160,620 1148,650 1155,690 1145,688 1140,655 1115,625 1090,655 1065,650 1090,625 1050,585 945,520 925,480Z'],
    [0, 'M1018,422 1135,412 1265,422 1235,465 1250,482 1240,493 1195,463 1175,468 1170,482 1205,510 1140,455 1070,428Z'],
    [0, 'M1320,332 1315,440 1325,490 1260,520 1255,570 1262,582 1240,575 1235,545 1205,510 1175,485 1180,465 1240,493 1250,482 1235,465 1265,422Z'],
    [0, 'M300,218 322,218 330,235 340,220 365,235 368,262 350,265 303,250Z'],
    [2, 'M240,228 265,215 300,218 300,250 292,265 297,300 310,330 305,348 245,325 248,298 262,292Z'],
    [4, 'M238,228 252,240 260,290 245,296 218,290 225,255Z'],
    [1, 'M215,292 245,296 242,322 268,345 262,365 235,375 228,405 195,415 160,395 145,370 150,350 185,335Z'],
    [3, 'M303,252 345,258 345,335 310,328 297,300Z'], [3, 'M345,262 375,262 395,290 405,347 348,338Z'],
    [5, 'M345,206 400,208 440,232 398,238 388,250 368,245Z'],
    [4, 'M368,250 398,238 442,230 452,345 405,348 405,320 382,310 395,293 380,290 383,265Z'],
    [4, 'M448,235 470,252 550,315 555,355 535,355 530,332 485,335 485,350 455,348Z'],
    [3, 'M535,330 550,315 618,360 612,375 505,432 535,410Z'],
    [4, 'M375,347 485,350 485,335 532,335 535,410 505,430 445,408 375,400Z'],
    [5, 'M375,400 445,408 475,415 505,432 375,437Z'], [4, 'M320,340 375,350 375,390 325,368Z'],
    [3, 'M268,345 320,345 325,368 365,390 345,388 310,450 280,458 235,440 228,405 235,375 262,365Z'],
    [2, 'M225,405 235,440 270,458 230,468 215,490 160,560 155,570 140,555 125,570 90,542 115,520 130,490 155,465 185,440 210,425Z'],
    [0, 'M345,388 372,395 372,485 358,510 340,515 325,460 308,450 325,410Z'],
    [0, 'M215,490 235,460 270,465 292,480 298,525 268,538 235,515Z'],
    [3, 'M275,460 300,450 325,465 335,530 300,528 292,480Z'],
    [4, 'M215,500 268,538 230,550 195,575 200,590 185,612 160,595 158,560Z'],
    [2, 'M90,542 125,570 140,555 158,575 158,600 145,640 120,690 115,718 148,752 100,745 65,705 53,650 58,600 72,560Z'],
    [3, 'M158,600 190,610 235,635 178,705 140,680 125,722 112,715 120,690 145,640Z'],
    [4, 'M195,575 230,550 268,538 312,560 320,590 318,625 315,690 230,635 190,605Z'],
    [0, 'M140,680 178,705 148,752 125,722Z'],
    [3, 'M235,635 300,690 330,690 335,785 235,830 220,795 180,770 148,752 178,705Z'],
    [4, 'M275,532 340,530 345,515 358,510 372,485 382,505 390,510 395,560 435,570 440,612 345,620 318,632 320,600 345,585 318,560Z'],
    [4, 'M372,437 515,440 510,470 435,475 390,505 372,480Z'], [4, 'M390,508 435,480 437,545 428,565 395,560Z'],
    [3, 'M437,480 495,475 505,550 520,553 520,585 445,602 435,570Z'],
    [0, 'M450,515 465,510 475,518 490,518 490,535 455,532Z'],
    [2, 'M318,635 345,632 360,650 365,718 330,720Z'],
    [3, 'M340,622 437,618 443,685 420,710 370,715 355,650Z'],
    [3, 'M330,722 390,712 395,835 335,815Z'], [3, 'M390,715 445,690 450,722 480,738 495,765 398,788Z'],
    [2, 'M230,830 250,812 300,790 335,788 335,818 355,825 350,858 280,860 265,872 255,860 225,862 225,835Z'],
    [2, 'M398,788 490,765 500,800 495,855 385,858 392,830Z'],
    [2, 'M440,605 515,588 520,560 545,550 552,690 520,698 475,668 445,683 437,640Z'],
    [1, 'M445,685 475,668 520,698 552,692 565,700 553,730 575,748 545,740 510,740 450,722Z'],
    [3, 'M505,432 530,440 560,475 588,495 555,520 545,545 510,558 498,480 515,455Z'],
    [3, 'M510,430 612,375 625,468 588,495 560,475 530,440Z'],
    [3, 'M612,372 625,365 635,382 655,380 662,435 690,425 692,437 628,468Z'],
    [1, 'M620,365 690,345 735,355 790,385 798,435 770,470 790,510 795,540 745,560 735,560 700,487 665,500 650,482 605,522 590,495 628,468 692,437 690,425 662,435 655,380 635,382Z'],
    [2, 'M545,520 590,495 605,522 650,482 715,580 690,605 690,625 645,650 548,600Z'],
    [2, 'M662,500 698,487 725,535 715,565Z'], [1, 'M705,487 722,500 748,570 715,578 720,540Z'],
    [1, 'M552,605 640,655 640,680 662,705 640,738 590,750 560,745 555,700Z'],
    [0, 'M575,755 595,750 690,742 715,850 700,880 640,892 630,840 575,840Z'],
    [0, 'M468,728 490,732 540,740 548,750 575,785 575,845 550,835 520,785 495,755Z'],
    [2, 'M495,800 520,825 540,835 555,850 500,852Z'],
    [1, 'M185,868 265,878 300,880 350,905 385,908 215,928 205,912 175,902 170,885Z'],
    [4, 'M295,880 350,865 358,822 380,820 383,860 408,865 410,907 350,902 340,897 300,895Z'],
    [2, 'M410,868 490,872 497,898 412,903Z'],
    [1, 'M950,832 1005,795 1000,780 1060,772 1085,750 1110,720 1122,725 1120,760 1100,778 1165,785 1172,815 960,862Z'],
    [2, 'M1130,700 1150,698 1180,718 1240,705 1273,755 1270,797 1245,797 1215,817 1168,812 1178,775 1145,770 1148,720Z'],
    [0, 'M955,835 962,862 770,945 762,905 820,868 900,850Z'],
    [0, 'M762,908 770,945 720,965 620,1000 615,968 700,940Z'],
    [0, 'M615,968 620,1000 462,1072 462,1012 475,998 520,972 575,955 590,965Z'],
    [0, 'M615,966 650,940 688,938Z'],
    [0, 'M705,672 735,640 762,625 762,665 725,688 708,686Z'], [0, 'M770,775 780,762 800,760 820,775 810,790 780,788Z'],
    [0, 'M742,850 750,822 765,814 778,828 772,855 745,866Z'], [0, 'M852,800 865,787 895,800 898,820 880,828 855,810Z'],
    [0, 'M890,570 915,582 930,562 938,620 955,640 950,690 925,703 880,690 895,640Z'],
    [0, 'M935,700 950,693 962,715 955,760 938,798 888,797 895,788 925,780 940,740Z'],
    [0, 'M1000,655 1030,635 1022,665 1010,690Z'], [0, 'M1027,705 1045,655 1080,655 1085,680 1100,700 1065,722Z'],
    [0, 'M965,750 982,758 980,778 965,770Z'], [0, 'M843,703 860,705 877,715 868,735 845,745 835,730Z'],
    [0, 'M803,715 828,708 815,730Z'], [0, 'M883,735 900,722 905,740 890,742Z'], [0, 'M905,730 918,722 922,740 908,742Z'],
    [0, 'M790,602 812,593 812,608 795,613Z'], [0, 'M824,590 835,570 843,580 833,598Z'], [0, 'M1010,738 1025,725 1042,735 1030,748 1012,746Z'],
    [0, 'M1092,782 1105,740 1125,742 1118,778 1135,783 1120,783 1105,770Z']
  ];
  const cityLines = 'M168,92 240,120 278,130M258,80 250,120M258,120 305,95 335,90M283,130 255,185M178,705 215,715 210,745 240,770 235,800M300,690 270,740 265,765 235,800M1200,100 1212,135M795,185 808,228M1120,205 1125,232M488,350 488,338M640,330 650,318M495,755 545,815 560,835M530,770 550,768 572,800 568,820M535,775 560,815M500,845 575,850M420,862 560,868M180,240 195,225M625,468 605,522M550,602 640,655';
  const coast = 'M90,542 98,552 104,540 110,528 104,520 118,518 116,506 124,510 124,494 136,500 134,486 146,488 144,474 158,474 155,462 167,466 165,452 178,456 175,444 188,448 184,436 198,440 196,428 208,432 207,420 218,420M240,228 228,250 218,255 222,266 210,270 214,282 202,285 208,296 196,300 200,312 188,318M150,385 148,420 160,428 175,420 168,400M180,240 190,222 195,238 202,215 210,228M320,205 338,238M330,200 322,235 345,225M868,440 868,480 882,520M885,470 893,515M902,440 915,510M930,490 930,455 950,445 975,452M1035,605 1060,592M1205,510 1235,545 1240,575M590,685 615,712 618,735M552,700 548,725 565,745M225,800 232,815 225,825 240,828 225,840 245,842M960,612 965,625 958,640 970,645 962,655M880,690 890,665 882,650 895,655M735,715 742,735 735,738 750,740M742,750 742,785M755,750 750,765M800,660 812,665 825,652M770,640 775,648M845,640 848,645M858,628 862,632M878,602 883,606M828,600 830,604M830,612 830,616M975,635 975,660M1125,640 1145,665M1060,790 1070,765 1082,755M990,795 1005,815M1000,790 1010,808M855,730 850,748 838,740M1015,735 1030,745 1038,735M838,710 850,715 870,712M250,860 262,880 275,872M290,920 288,928M0,740 6,742 8,772 0,775M0,878 6,880 6,888 0,888M15,948 22,953';

  const sideIcons = ['brushFaded', 'labelMini', 'cloud', 'cube', 'brushes', 'history'];
</script>

{#snippet icon(name, size = 48)}
  <svg class="ico" width={size} height={size} viewBox="0 0 48 48" aria-hidden="true">{@html icons[name]}</svg>
{/snippet}

{#snippet check(flat = false)}
  <span class="check" class:flat>
    <svg width="22" height="22" viewBox="0 0 22 22"><path d="M3 12l5 6L19 4" fill="none" stroke="#333" stroke-width="2.600" stroke-linecap="round" stroke-linejoin="round" /></svg>
  </span>
{/snippet}

{#snippet closeBox()}
  <svg class="close" width="23" height="23" viewBox="0 0 23 23"><rect x="2" y="2" width="19" height="19" rx="5" fill="none" stroke="#383838" stroke-width="1.800" /><rect x=".5" y=".5" width="22" height="22" rx="6" fill="none" stroke="#999" stroke-width=".6" /><path d="M6 6l11 11M17 6L6 17" stroke="#383838" stroke-width="3.800" /></svg>
{/snippet}

{#snippet tri()}<i class="tri"></i>{/snippet}
{#snippet spin()}<span class="spin"><i class="up"></i><i class="dn"></i></span>{/snippet}

<div class="desktop">
  <div class="window">
    <header class="titlebar">
      <span class="lights"><i></i><i></i><i></i></span>
      <h1>*NYC_Population_Density — QGIS</h1>
    </header>

    {#each bars as bar, r}
      <div class="toolbar bar{r}">
        {#each bar as it}
          <span class="cell {it.k} dim{it.off || 0}" class:active={it.on} style:width="{it.w}px">
            {#if it.k === 'icon'}{@render icon(it.n)}{:else if it.k === 'more'}»{:else}<i></i>{/if}
          </span>
        {/each}
      </div>
    {/each}

    <main>
      <section class="left">
        <div class="dock-title t1"><h2>Browser</h2>{@render closeBox()}</div>
        <div class="mini m1">
          {#each ['addLayer', 'refresh', 'funnel', 'collapse', 'info'] as n}<span>{@render icon(n, 28)}</span>{/each}
        </div>
        <div class="tree browser">
          <ul>
            {#each browser as [ic, name, kids]}
              <li><i class="exp" class:none={!kids}></i>{@render icon(ic, 32)}<span>{name}</span></li>
            {/each}
          </ul>
          <div class="vscroll"><i></i></div>
        </div>
        <div class="dock-title t2"><h2>Layers</h2>{@render closeBox()}</div>
        <div class="mini m2">
          <span class="sel">{@render icon('brush', 28)}</span>
          <span>{@render icon('addGroup', 28)}</span><span class="eye">{@render icon('eye', 32)}</span><span>{@render icon('funnelDown', 29)}</span><span class="dimmed">{@render icon('exprFilter', 28)}</span>
          <em>{@render tri()}</em>
          <span>{@render icon('expand', 29)}</span><span>{@render icon('collapse', 29)}</span><span>{@render icon('removeLayer', 29)}</span>
        </div>
        <div class="tree layers">
          <div class="root"><i class="open"></i>{@render check(true)}{@render icon('poly', 32)}<b>nynta_population_density</b></div>
          {#each classes as [c, , legend]}
            <div class="leg">{@render check(true)}<i class="swatch" style:background={c}></i><span>{legend}</span></div>
          {/each}
        </div>
      </section>

      <section class="map">
        <svg width="786" height="1202" viewBox="0 0 786 1202">
          <g stroke="#232323" stroke-width="3.500" stroke-linejoin="round">
            <g transform="translate(-10 669.500) scale(.33333)">
              {#each staten as [c, d]}<path {d} fill={fills[c]} />{/each}
              <path d={statenLines} fill="none" />
              <path d="M473,124l12,-3 2,8 -8,3zM829,128l9,-1 0,8 -8,0zM830,192l18,7M902,458l5,-2 1,12 -6,1zM915,528l8,4" fill="#444" />
            </g>
            <g transform="translate(290 529.500) scale(.33333)">
              {#each city as [c, d]}<path {d} fill={fills[c]} />{/each}
              <path d={cityLines} fill="none" />
              <path d={coast} fill="none" />
            </g>
            <g transform="translate(290 209.500) scale(.33333)">
              <path d="M560,140 573,95 578,71 590,72 636,90 636,140Z" fill={fills[1]} />
              <path d="M636,140 636,91 760,140Z" fill={fills[0]} />
              <path d="M788,140 795,120 808,110 800,105 808,95 815,96 812,112 830,112 842,125 855,128 860,140Z" fill={fills[2]} />
            </g>
          </g>
        </svg>
      </section>

      <section class="right">
        <div class="dock-title t3"><h2>Layer Styling</h2>{@render closeBox()}</div>
        <div class="combo layer">{@render icon('poly', 32)}<span>nynta_population_density</span>{@render tri()}</div>
        <div class="body">
          <nav class="side">
            {#each sideIcons as n, k}<span class="s{k}">{@render icon(n, 46)}</span>{/each}
          </nav>
          <div class="form">
            <div class="combo grad">
              <svg width="28" height="30" viewBox="0 0 28 30"><path d="M1.500 2h20v6h-20z" fill="#fd0" stroke="#f90" stroke-width="2.500" /><path d="M6 12h19v6H6z" fill="#ff4f0a" stroke="#d30" stroke-width="2.500" /><path d="M1.500 22h20v6h-20z" fill="#b80a00" stroke="#600" stroke-width="2.500" /></svg>
              <span>Graduated</span>{@render tri()}
            </div>
            <div class="row value"><label>Value</label><div class="combo"><small>1.2</small><span>Density</span>{@render tri()}</div><div class="btn eps"><svg width="26" height="26" viewBox="4 0 34 44">{@html epsilon('#6a3d7c')}</svg></div></div>
            <div class="row symbol"><label>Symbol</label><div class="combo edge"><i class="fill"></i>{@render tri()}</div></div>
            <div class="row format"><label>Legend format</label><div class="field">%1 - %2</div>
              <div class="combo prec"><span class="clip"><span>Precision 0</span></span>
                <svg width="26" height="20" viewBox="0 0 26 20"><path d="M0 10L8 0h18v20H8z" fill="#b4b4b4" /><path d="M11 5l9 10M20 5l-9 10" stroke="#fff" stroke-width="2.400" /></svg>{@render spin()}</div>
              {@render check()}<span class="trim">Trim</span></div>
            <div class="row ramp"><label>Color ramp</label><div class="combo edge"><i class="fill"></i>{@render tri()}</div></div>
            <div class="tabs"><span class="tab current">Classes</span><span class="tab">Histogram</span><i></i></div>
            <div class="table">
              <div class="thead"><span class="c1">Symbol{@render tri()}</span><span class="c2">Values</span><span class="c3">Legend</span></div>
              {#each classes as [c, v, l], k}
                <div class="tr" class:hot={k === 0}>{@render check(k > 0)}<i class="chip" style:background={c}></i><span class="v">{v}</span><span class="l">{l}</span></div>
              {/each}
            </div>
            <div class="row mode"><label>Mode</label>
              <div class="combo"><svg width="32" height="32" viewBox="0 0 32 32"><rect width="32" height="32" rx="3" fill="#a4a4a0" /><path d="M2 5v22M30 5v22M6 4v24M26 4v24" stroke="#5b8cc6" stroke-width="2" /><path d="M3 10v-7h26v7M3 22v7h26v-7M16 3v6M16 23v6" stroke="#dcc02c" stroke-width="2.600" fill="none" /><path d="M3.500 8v16M16 8v16M28.500 8v16" stroke="#111" stroke-width="5" stroke-dasharray="4 2" /></svg><span>Equal Count (Quantile)</span>{@render tri()}</div>
              <label class="cl">Classes</label><div class="combo num"><span>6</span>{@render spin()}</div></div>
            <div class="row actions">
              <span class="btn b1">Classify</span>
              <span class="btn sq"><svg width="28" height="28" viewBox="0 0 28 28"><path d="M9 1h10v8h8v10h-8v8H9v-8H1V9h8z" fill="#fff" stroke="#5a8c5a" stroke-width="2" /><path d="M14 4v20M4 14h20" stroke="#5a8c5a" stroke-width="4" /></svg></span>
              <span class="btn sq"><svg width="28" height="12" viewBox="0 0 28 12"><path d="M1 1h26v10H1z" fill="#fff" stroke="#ef4040" stroke-width="2" /><path d="M4 6h20" stroke="#ef4040" stroke-width="4.500" /></svg></span>
              <span class="btn b2">Delete All</span><span class="btn adv">Advanced<i></i></span>
            </div>
            <div class="row link">{@render check()}<span>Link class boundaries</span></div>
            <div class="row render"><svg width="16" height="24" viewBox="0 0 16 24"><path d="M1.500 2v19L14 11.500z" fill="#555" stroke="#222" stroke-width="2" /></svg><b>Layer Rendering</b></div>
            <div class="hscroll"><i></i></div>
            <div class="row foot"><span class="btn u">{@render icon('undo', 26)}</span><span class="btn u">{@render icon('redo', 26)}</span><span class="live">{@render check()}<span>Live update</span></span><span class="btn apply">Apply</span></div>
          </div>
        </div>
      </section>
    </main>

    <footer>
      <div class="field locate"><svg width="26" height="26" viewBox="0 0 26 26"><circle cx="11" cy="10" r="8.500" fill="none" stroke="#999" stroke-width="2" /><path d="M17 16l7 8" stroke="#999" stroke-width="2.500" /></svg><span>Type to locate (⌘K)</span></div>
      <span class="cut coord"><span>Coordinat</span></span>
      <div class="field xy">1052332,313259</div>
      <svg class="mouse" width="32" height="34" viewBox="0 0 32 34"><g stroke="#000" stroke-width="2.400" fill="#fff"><path d="M12 14c6-2 15 3 15 11 0 7-10 9-14 4-3-4-4-10-1-15z" /><path d="M4 4c5-4 9-1 10 4l1 7c-3 3-7 3-9 0C4 12 1 8 4 4z" /><path d="M8 3l4 13" fill="none" /><circle cx="18" cy="23" r="2.800" /></g><path d="M18 6h2M22 7h2M24 4h2M27 2h2M1 21h2" stroke="#111" stroke-width="2.300" /></svg>
      <span class="cal">cal</span>
      <div class="combo scale"><span>1:716766</span>{@render tri()}</div>
      <svg class="lock" width="24" height="32" viewBox="0 0 24 32"><path d="M4.500 15V9c0-9 15-9 15 0v6" fill="none" stroke="#e2e2e2" stroke-width="2.200" /><rect y="14" width="24" height="17" rx="2" fill="#5e5e5e" /></svg>
      <span class="cut mag"><span>Magnifie</span></span>
      <div class="combo pct"><span>100%</span>{@render spin()}</div>
      <span class="rot">otatio</span>
      <div class="combo deg"><span>0.0 °</span>{@render spin()}</div>
      <span class="rend">{@render check()}<span>Render</span></span>
      <svg class="crs" width="28" height="28" viewBox="0 0 28 28"><circle cx="14" cy="13" r="12" fill="#c9c9c9" /><path d="M14 0v27M1 13h26M4 6h20M4 20h20M14 1C4 8 4 19 14 26M14 1c10 7 10 18 0 25" fill="none" stroke="#666" stroke-width="1.600" /></svg>
      <span class="epsg">EPSG:2263</span>
      <svg class="chat" width="34" height="32" viewBox="0 0 34 32"><path d="M16 0c9 0 16 6 16 13 0 5-3 8-6 10 0 3 1 5 4 7-5 0-8-1-10-4C8 28 0 21 0 13 0 6 7 0 16 0z" fill="#5e5e5e" /><g fill="#fff"><circle cx="8.500" cy="13" r="2.700" /><circle cx="16" cy="13" r="2.700" /><circle cx="23.500" cy="13" r="2.700" /></g></svg>
    </footer>
  </div>

  <div class="dialog">
    <header><i class="r"></i><i></i><i class="g"></i><h3>Enter Class Bounds</h3></header>
    <div class="line l1"><label>Lower value</label><div class="field">0.00</div></div>
    <div class="line l2"><label>Upper value</label><div class="field focus">20000<i></i></div></div>
    <div class="btns"><span class="btn">Cancel</span><span class="btn ok">OK</span></div>
  </div>
  <div class="mark m-dialog"></div>
  <div class="mark m-table"></div>
</div>

<style>
  :global(body) { margin: 0; background: #120202; }
  .desktop, .desktop :global(*) { box-sizing: border-box; }
  .desktop { position: relative; width: 2152px; height: 1560px; overflow: hidden; background: linear-gradient(90deg, #0a0000 40%, #3a0805); font-family: Inter, "Liberation Sans", sans-serif; font-size: 25px; font-weight: 500; color: #101010; letter-spacing: .05px; line-height: 1; white-space: nowrap; }
  h1, h2, h3, ul { margin: 0; padding: 0; font: inherit; list-style: none; }
  i { display: block; font-style: normal; }
  svg { display: block; flex: none; }
  .window { width: 2149px; height: 1555px; display: flex; flex-direction: column; overflow: hidden; background: #727272; border-radius: 18px 20px 22px 22px; position: relative; }
  .window::after { content: ''; position: absolute; inset: 0; border-radius: inherit; box-shadow: inset 0 0 0 2px rgba(255, 255, 255, .2); pointer-events: none; }
  .titlebar { flex: none; height: 55px; background: #383431; border-bottom: 2px solid #0b0b0b; display: grid; grid-template-columns: 560px 1027px; align-items: center; }
  .lights { display: flex; gap: 16px; padding-left: 16px; margin-top: -2px; }
  .lights i { width: 24px; height: 24px; border-radius: 50%; background: #5a5654; }
  .titlebar h1 { font-weight: 700; font-size: 26px; text-align: center; color: #b5b2b0; margin-top: -2px; letter-spacing: -.08px; }

  .toolbar { flex: none; display: flex; align-items: center; }
  .bar0 { height: 74px; } .bar1 { height: 82px; } .bar2 { height: 74px; }
  .cell { flex: none; display: flex; justify-content: center; align-items: center; }
  .handle { justify-content: flex-end; }
  .handle i { width: 3px; height: 18px; border: 1px solid #a9a9a9; border-radius: 2px; }
  .sep i { width: 1px; height: 14px; background: #4a4a4a; }
  .arrow { padding-right: 2px; }
  .arrow i { border: 4px solid transparent; border-top: 8px solid #bdbdbd; border-bottom: 0; margin-top: 2px; }
  .more { justify-content: flex-end; font-size: 20px; color: #434343; padding-bottom: 4px; }
  .active { position: relative; }
  .active::before { content: ''; position: absolute; inset: -8px 1px auto 1px; height: 66px; border: 2px solid #f4f4f4; border-radius: 6px; }
  .dim1 .ico { opacity: .2; filter: saturate(.6); }
  .dim2 .ico { opacity: .36; filter: saturate(.6); }
  .dim3 .ico { opacity: .46; }
  .dim4 .ico { opacity: .3; filter: saturate(.5); }
  .bar2 .dim1 .ico { opacity: .13; } .bar2 .dim2 .ico { opacity: .32; }
  .ico { overflow: visible; }

  main { flex: none; height: 1208px; display: flex; }
  .left { width: 508px; display: flex; flex-direction: column; }
  .dock-title { flex: none; display: flex; align-items: center; font-size: 21px; }
  .dock-title h2 { text-align: center; width: 445px; padding-top: 5px; letter-spacing: .2px; }
  .dock-title .close { margin-left: 23px; }
  .t1 { height: 42px; margin-top: -2px; } .t2 { height: 56px; } .t3 { height: 43px; margin-top: -2px; }
  .t3 h2 { width: 778px; } .t3 .close { margin-left: 29px; }
  .mini { flex: none; display: flex; align-items: center; }
  .mini span { width: 52px; height: 50px; display: flex; justify-content: center; align-items: center; }
  .mini em { width: 24px; display: flex; justify-content: center; margin-left: -9px; margin-right: 9px; }
  .m1 { height: 54px; padding-left: 4px; margin-top: 2px; }
  .m2 { height: 50px; padding-left: 6px; margin-top: -2px; }
  .mini .sel { width: 50px; border: 2px solid #f4f4f4; border-radius: 6px; }
  .mini .eye { padding-left: 3px; }
  .mini .dimmed { opacity: .3; }
  .tree { margin-left: 1px; width: 495px; border: 2px solid #333; border-radius: 4px; background: #b2b2b2; flex: none; }
  .browser { height: 478px; margin-top: 5px; display: flex; justify-content: space-between; padding: 2px 2px 2px 10px; }
  .browser li { height: 36px; display: flex; align-items: center; }
  .browser li span { margin-left: 12px; letter-spacing: .06px; }
  .exp { border: 5px solid transparent; border-left: 10px solid #6c6c6c; border-right: 0; margin: 0 19px 0 2px; width: 10px; }
  .exp.none { visibility: hidden; }
  .browser .ico { margin-left: -2px; }
  .vscroll { width: 16px; border-radius: 5px; background: #353535; padding: 1px 2px; }
  .vscroll i { height: 336px; background: #727272; border-radius: 3px; }
  .layers { height: 519px; margin-top: 6px; }
  .root { display: flex; align-items: center; height: 50px; padding-left: 15px; }
  .root .open { border: 6px solid transparent; border-top: 10px solid #6c6c6c; border-bottom: 0; margin-right: 22px; }
  .root .ico { margin: -2px 12px 0 14px; height: 26px; }
  .root b { font-weight: 700; font-size: 26px; text-decoration: underline; text-decoration-thickness: 2px; text-decoration-skip-ink: none; text-underline-offset: 3px; letter-spacing: .08px; margin-top: -2px; }
  .leg { display: flex; align-items: center; height: 68px; margin-bottom: 8px; padding-left: 89px; letter-spacing: .42px; }
  .leg .swatch { width: 68px; height: 68px; border: 2px solid rgba(60, 50, 20, .38); margin: 0 12px 0 14px; }
  .check { display: flex; flex: none; width: 26px; height: 26px; border: 2px solid #333; border-radius: 7px; background: #adadad; align-items: center; justify-content: center; }
  .check.flat { background: transparent; }

  .map { width: 788px; border: 2px solid #585858; border-right: 0; border-bottom-width: 1px; background: #fff; margin-top: 3px; height: 1205px; overflow: hidden; }
  .map svg { width: 786px; height: 1202px; }

  .right { width: 853px; padding-left: 20px; display: flex; flex-direction: column; }
  .combo { display: flex; align-items: center; height: 48px; border: 2px solid #1f1f1f; border-radius: 6px; background: linear-gradient(#535353, #363636); color: #b2b2b2; flex: none; }
  .tri { border: 4px solid transparent; border-top: 7px solid #c2c2c2; border-bottom: 0; margin-left: auto; flex: none; width: 8px; }
  .combo .tri { margin-right: 10px; }
  .spin { margin-left: auto; margin-right: 10px; display: grid; gap: 15px; }
  .spin i { border: 4px solid transparent; width: 8px; }
  .spin .up { border-bottom: 8px solid #bcbcbc; border-top: 0; } .spin .dn { border-top: 8px solid #bcbcbc; border-bottom: 0; }
  .layer { width: 828px; margin-top: 4px; padding-left: 6px; }
  .layer .ico { margin: -3px 12px 0 0; height: 26px; }
  .layer span { letter-spacing: .25px; padding-top: 1px; }
  .body { display: flex; margin-top: 12px; height: 1098px; }
  .side { width: 76px; background: #363636; border-radius: 5px; padding: 4px; display: flex; flex-direction: column; align-items: center; }
  .side span { width: 68px; height: 60px; display: flex; align-items: center; justify-content: center; }
  .side .s0 { background: #f0f0f0; }
  .side .s1 { margin-bottom: -2px; }
  .side .s3, .side .s4 { margin-top: 1px; }
  .form { margin-left: 6px; width: 746px; overflow: hidden; display: flex; flex-direction: column; }
  .form > * { flex: none; }
  .grad { width: 760px; padding-left: 10px; }
  .grad span { margin-left: 12px; padding-top: 1px; letter-spacing: .1px; } .grad .tri { margin-right: 15px; }
  .row { display: flex; align-items: center; width: 746px; margin-top: 12px; position: relative; }
  .row label { width: 190px; flex: none; padding-top: 1px; }
  .value { height: 50px; } .value .combo { width: 502px; height: 50px; padding-left: 5px; padding-top: 1px; }
  .value small { font-size: 19px; color: #5c5c5c; width: 45px; letter-spacing: -.5px; margin-top: -6px; } .value .tri { margin-right: 9px; }
  .btn { flex: none; display: flex; align-items: center; justify-content: center; height: 48px; border: 2px solid #353535; border-radius: 6px; background: linear-gradient(#a3a3a3, #868686); padding-top: 1px; }
  .eps { width: 60px; height: 50px; margin-left: 12px; justify-content: flex-start; padding-left: 8px; padding-bottom: 3px; }
  .symbol { height: 44px; } .symbol .combo { height: 44px; }
  .edge { width: 575px; padding-left: 4px; border-color: #2b2b2b; }
  .edge .fill { width: 528px; } .edge .tri { margin: 0 0 0 13px; }
  .symbol .fill { height: 20px; background: #feffd3; border: solid #a9a98c; border-width: 2px 0; }
  .format { height: 48px; }
  .field { display: flex; align-items: center; height: 48px; border: 2px solid #353535; border-radius: 6px; background: #b2b2b2; flex: none; }
  .format .field { width: 252px; padding-left: 8px; letter-spacing: -.6px; }
  .prec { width: 188px; margin-left: 12px; padding-left: 4px; }
  .prec .clip { width: 97px; overflow: hidden; height: 34px; display: flex; align-items: center; }
  .prec .clip span { margin-left: -25px; } .prec svg { margin-left: 12px; } .prec .spin { margin-right: 9px; }
  .format .check { margin-left: 14px; } .trim { margin-left: 14px; letter-spacing: -.2px; }
  .ramp { height: 56px; } .ramp .combo { height: 56px; }
  .ramp .fill { height: 32px; background: linear-gradient(90deg, #ffffd4, #fed98e 25%, #fe9929 50%, #d95f0e 75%, #993404); }
  .tabs { display: flex; height: 52px; margin-top: 12px; align-items: flex-end; }
  .tab { display: flex; justify-content: center; align-items: center; border: 2px solid #3a3a3a; }
  .current { width: 152px; height: 52px; border-bottom: 0; padding-top: 2px; }
  .tab:not(.current) { width: 180px; height: 42px; border-left: 0; padding-top: 4px; }
  .tabs > i { flex: 1; height: 2px; background: #3a3a3a; }
  .table { margin-top: 18px; margin-left: 3px; height: 402px; width: 760px; border: 2px solid #333; border-radius: 4px; background: #b2b2b2; padding-top: 4px; }
  .thead { display: flex; height: 44px; margin: 0 0 2px 3px; background: #727272; border-bottom: 2px solid #333; font-size: 21px; letter-spacing: .15px; }
  .thead span { display: flex; align-items: center; padding: 0 0 3px 6px; }
  .thead .c1 { width: 166px; padding-right: 14px; border-right: 2px solid #333; } .thead .c2 { width: 296px; border-right: 2px solid #333; }
  .thead .tri { border-width: 5px; border-top: 10px solid #bbb; width: 10px; border-bottom: 0; margin-top: 5px; }
  .tr { display: flex; height: 52px; align-items: center; padding-left: 13px; }
  .hot { background: #f0f0f0; color: #000; }
  .tr .check { margin-top: 1px; }
  .tr .chip { width: 32px; height: 32px; border: 2px solid rgba(60, 50, 20, .35); margin-left: 22px; }
  .tr .v, .tr .l { margin-top: -12px; }
  .tr .v { width: 296px; margin-left: 84px; letter-spacing: .8px; } .tr .l { letter-spacing: .48px; }
  .mode { height: 48px; } .mode label { width: 84px; padding-left: 2px; }
  .mode .combo { width: 394px; padding-left: 6px; } .mode .combo span:not(.spin) { margin-left: 12px; padding-top: 1px; letter-spacing: .2px; }
  .mode label.cl { width: 136px; padding-left: 28px; } .mode .num { width: 150px; padding-left: 0; }
  .mode .num span:first-child { margin-left: 9px; } .mode .num .spin { margin: 0 0 0 92px; }
  .actions { height: 48px; gap: 12px; padding-left: 2px; }
  .b1 { width: 112px; } .sq { width: 56px; padding-top: 0; } .b2 { width: 132px; }
  .adv { width: 170px; margin-left: auto; margin-right: -16px; justify-content: flex-start; padding-left: 6px; }
  .adv i { border: 8px solid transparent; border-top: 9px solid #393939; border-bottom: 0; margin: 18px 0 0 10px; }
  .actions .btn { letter-spacing: -.3px; }
  .link { height: 28px; margin-top: 16px; padding-left: 4px; } .link span:last-child { margin-left: 14px; }
  .render { height: 40px; margin-top: 32px; padding-left: 9px; } .render b { margin-left: 19px; font-weight: 700; font-size: 26px; letter-spacing: .15px; padding-top: 1px; }
  .hscroll { margin-top: 6px; height: 16px; border: 2px solid #353535; border-radius: 4px; background: #353535; }
  .hscroll i { width: 733px; height: 12px; background: #727272; border-radius: 3px; }
  .foot { height: 50px; gap: 12px; } .u { width: 50px; height: 50px; padding-top: 0; }
  .live { display: flex; align-items: center; gap: 15px; margin-left: auto; } .apply { width: 86px; margin-left: 3px; letter-spacing: -.3px; }

  footer { flex: none; height: 62px; display: flex; align-items: center; font-size: 21.500px; letter-spacing: 0; }
  footer > span, footer .combo > span:first-child { padding-top: 1px; }
  .locate { width: 428px; height: 46px; margin-left: 8px; padding-left: 16px; color: #666; font-size: 25px; } .locate span { margin-left: 18px; }
  .cut { overflow: hidden; display: flex; justify-content: flex-end; height: 30px; align-items: center; }
  .coord { width: 90px; margin-left: 60px; }
  .xy { width: 210px; height: 44px; margin-left: 7px; padding-left: 13px; letter-spacing: .4px; }
  .mouse { margin-left: 9px; } .cal { margin-left: 29px; width: 29px; }
  .scale { width: 204px; margin-left: 8px; padding-left: 9px; letter-spacing: -.15px; } .lock { margin-left: 24px; }
  .mag { width: 78px; margin-left: 19px; } .pct { width: 181px; margin-left: 6px; padding-left: 8px; }
  .rot { margin-left: 18px; width: 62px; } .deg { width: 185px; margin-left: 18px; padding-left: 8px; }
  .rend { display: flex; align-items: center; gap: 15px; width: 128px; margin-left: 15px; } .crs { margin-left: 14px; }
  .epsg { margin-left: 6px; width: 120px; } .chat { margin-left: 45px; }

  .dialog { position: absolute; left: 827px; top: 545px; width: 456px; height: 302px; border-radius: 21px; background: #727272; border: 1px solid #0c0c0c; overflow: visible; box-shadow: inset 0 0 0 2px rgba(255, 255, 255, .2), 0 36px 84px rgba(0, 0, 0, .66), 0 0 24px rgba(0, 0, 0, .18); }
  .dialog header { height: 57px; border-radius: 20px 20px 0 0; background: #373330; border-bottom: 2px solid #080808; display: flex; gap: 16px; align-items: center; padding-left: 16px; box-shadow: inset 0 2px 0 rgba(255, 255, 255, .25); }
  .dialog header i { width: 24px; height: 24px; border-radius: 50%; background: #5a5856; }
  .dialog header .r { background: #ff5f57; } .dialog header .g { background: #28c840; }
  .dialog h3 { font-size: 26px; font-weight: 700; color: #b2afad; margin-left: 2px; margin-top: -2px; letter-spacing: .18px; }
  .line { display: flex; align-items: center; height: 48px; padding-left: 22px; } .line label { width: 158px; letter-spacing: -.05px; padding-top: 1px; } .line .field { width: 252px; padding-left: 8px; }
  .l1 { margin-top: 21px; } .l2 { margin-top: 12px; }
  .focus { border-color: #c9c9c9; } .focus i { width: 2px; height: 31px; background: #555; margin-left: 1px; }
  .btns { display: flex; gap: 12px; justify-content: flex-end; margin: 44px 22px 0 0; } .btns .btn { width: 100px; letter-spacing: -.2px; } .btns .ok { width: 54px; }
  .mark { position: absolute; border: 6px solid #ff3370; border-radius: 3px; }
  .m-dialog { left: 841px; top: 669px; width: 433px; height: 78px; } .m-table { left: 1561px; top: 803px; width: 305px; height: 77px; }
</style>
